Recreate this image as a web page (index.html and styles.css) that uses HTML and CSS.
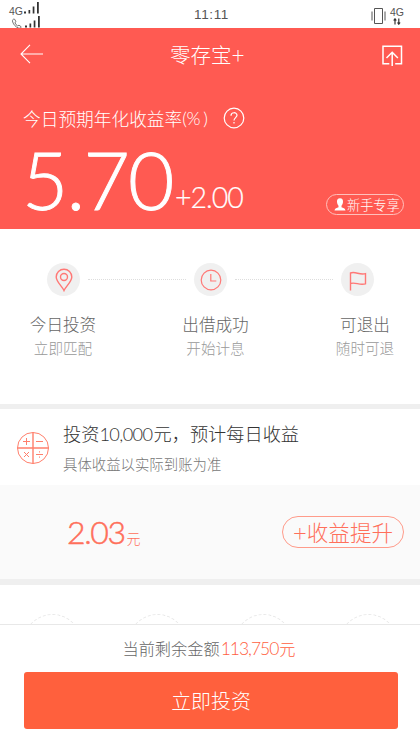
FILE: index.html
```html
<!DOCTYPE html>
<html lang="zh-CN">
<head>
<meta charset="utf-8">
<meta name="viewport" content="width=device-width, initial-scale=1">
<title>零存宝+</title>
<link rel="stylesheet" href="styles.css">
</head>
<body>
<div class="app">
  <div class="status">
    <div class="signals">
      <div class="signal"><span class="net">4G</span>
        <svg width="16" height="13" viewBox="0 0 16 13" fill="#333"><path d="M0 10.500h2v2H0zM4.500 9h1.700v3.500H4.500zM8.700 5.500h1.700v7H8.700zM13 1h1.800v11.500H13z"/></svg>
      </div>
      <div class="signal">
        <svg class="phone" width="12" height="11" viewBox="0 0 12 11" fill="none" stroke="#666" stroke-width=".9"><path d="M3.600 1.200C2 .7 1 2.200 1.700 4c.9 2.700 3 5 5.700 6 1.400.5 2.600.1 2.800-1.200L8 7.200l-1.400.7C5.300 7.200 4.400 6 3.900 4.600L5 3.700z"/></svg>
        <svg width="16" height="13" viewBox="0 0 16 13" fill="#333"><path d="M0 10.500h2v2H0zM4.500 8.500h1.700v4H4.500zM8.700 5.500h1.700v7H8.700zM13 1h1.800v11.500H13z"/></svg>
      </div>
    </div>
    <div class="time">11:11</div>
    <div class="right">
      <svg width="16" height="18" viewBox="0 0 16 18" fill="none" stroke="#555" stroke-width="1"><path d="M3.500 1.500h8v15h-8zM1 4.500v9M14 4.500v9"/></svg>
      <div class="data"><span class="net">4G</span>
        <svg width="8" height="7" viewBox="0 0 8 7" fill="none" stroke="#333" stroke-width="1.200"><path d="M2 6.500V1M.7 2.500L2 .8l1.300 1.700M5.800.5V6M4.500 4.500l1.300 1.700 1.300-1.700"/></svg>
      </div>
    </div>
  </div>

  <section class="hero">
    <header class="nav">
      <svg class="back" width="24" height="20" viewBox="0 0 24 20" fill="none" stroke="#fff" stroke-width="1.100"><path d="M10 .8L1 10l9 9.200M1 10h22"/></svg>
      <h1>零存宝<span class="plus">+</span></h1>
      <svg class="share" width="21" height="22" viewBox="0 0 21 22" fill="none" stroke="#fff" stroke-width="1.500"><path d="M7.300 18.700H1V1.300h18.500v17.400h-6.300M10.200 21V7.300M4.500 13l5.700-5.700L15.900 13"/></svg>
    </header>
    <div class="rate-label"><span>今日预期年化收益率</span><span class="pct">(%<span class="close">)</span></span>
      <svg width="22" height="22" viewBox="0 0 22 22" fill="none" stroke="#fff" stroke-width="1.200"><circle cx="11" cy="11" r="9.800"/><path d="M8 8.700c0-4 6-3.800 6-.4 0 2.200-3 2.500-3 5.200M11 15v1.600"/></svg>
    </div>
    <div class="rate-row">
      <div class="rate">5.70</div><div class="bonus"><span class="bonus-plus">+</span>2.00</div>
      <div class="badge">
        <svg width="12" height="13" viewBox="0 0 12 13" fill="#fff"><path d="M6 .3c2.200 0 3.200 1.500 3 3.700C8.800 5.600 8.200 7 7.500 7.700v1.600c1.500.7 3.700.8 4 3.200H.5c.3-2.400 2.500-2.500 4-3.200V7.700C3.800 7 3.200 5.600 3 4 2.800 1.800 3.800.3 6 .3z"/></svg>
        <span>新手专享</span>
      </div>
    </div>
  </section>

  <section class="steps">
    <div class="track">
      <div class="dot"><svg width="18" height="24" viewBox="0 0 18 24" fill="none" stroke="#ff7876" stroke-width="1.400"><path d="M9 22.500C7.600 19 1.200 13.700 1.200 9a7.800 7.800 0 0 1 15.600 0C16.800 13.700 10.400 19 9 22.500z"/><circle cx="9" cy="9" r="3.500"/></svg></div>
      <div class="line"></div>
      <div class="dot"><svg width="22" height="22" viewBox="0 0 22 22" fill="none" stroke="#ff7876" stroke-width="1.200"><circle cx="11" cy="11" r="9.800"/><path d="M10.800 5v7h5.500"/></svg></div>
      <div class="line"></div>
      <div class="dot"><svg class="flag" width="18" height="20" viewBox="0 0 18 20" fill="none" stroke="#ff7876" stroke-width="1.400"><path d="M1.500 19.500V2c5-2 9 2.500 15 .6v10.200c-6 1.900-10-2-15-.3"/></svg></div>
    </div>
    <div class="labels">
      <div class="step"><b>今日投资</b><span>立即匹配</span></div>
      <div class="step mid"><b>出借成功</b><span>开始计息</span></div>
      <div class="step"><b>可退出</b><span>随时可退</span></div>
    </div>
  </section>

  <section class="invest">
    <svg width="34" height="34" viewBox="0 0 34 34" fill="none" stroke="#ff7f6c" stroke-width="1"><circle cx="17" cy="17" r="15.500"/><path stroke-width="1.400" d="M17 1.500v31M1.500 17h31"/><path d="M7 10.500h7M10.500 7v7M20 10.500h7M8 21l5 5M13 21l-5 5M20 23.500h7M23.500 20.300v1.200M23.500 25.500v1.200"/></svg>
    <div class="invest-text">
      <h2>投资<span class="amount">10,000</span>元，预计每日收益</h2>
      <p>具体收益以实际到账为准</p>
    </div>
  </section>

  <section class="earn">
    <div class="daily">2.03<small>元</small></div>
    <div class="boost"><span class="plus">+</span>收益提升</div>
  </section>

  <section class="features">
    <i></i><i></i><i></i><i></i>
  </section>

  <footer class="bottom">
    <div class="remain">当前剩余金额<em><span>113,750</span>元</em></div>
    <button class="cta">立即投资</button>
  </footer>
</div>
</body>
</html>
```
FILE: styles.css
```css
* { box-sizing: border-box; margin: 0; padding: 0; }
body {
  width: 420px;
  height: 747px;
  overflow: hidden;
  background: #fff;
  font-family: "Noto Sans CJK SC", sans-serif;
  font-weight: 300;
  color: #666;
}
svg { display: block; flex: none; }
h1, h2, b { font-weight: 300; }
.app { display: flex; flex-direction: column; height: 747px; }

.status { height: 28px; flex: none; display: grid; grid-template-columns: 1fr 1fr 1fr; overflow: hidden; }
.signals { padding: 1px 0 0 9px; }
.signal { display: flex; height: 14px; gap: 1px; }
.signal .net { width: 14px; }
.phone { margin: 3px 1px 0 2px; }
.net { font: 400 10.500px/20px "Liberation Sans", sans-serif; color: #555; }
.time { text-align: center; font: 400 13.500px/30px "Liberation Sans", sans-serif; letter-spacing: .6px; color: #555; padding-left: 3px; }
.right { display: flex; justify-content: flex-end; padding: 7px 16px 0 0; gap: 3px; }
.data { display: flex; flex-direction: column; align-items: center; }
.data .net { line-height: 10px; height: 11px; }

.hero { height: 201px; flex: none; background: #ff5a52; color: #fff; }
.nav { height: 52px; display: flex; align-items: center; padding: 0 17px 0 20px; }
.nav h1 { margin-left: 126px; font-size: 20.500px; line-height: 52px; white-space: nowrap; }
.plus { display: inline-block; font-family: Lato, sans-serif; font-size: 1.1em; line-height: 1; }
.share { margin: 3px 0 0 auto; }
.rate-label { display: flex; align-items: center; height: 28px; margin: 24px 0 0 23px; font-size: 17.700px; line-height: 28px; }
.rate-label svg { margin-top: -1px; }
.pct { width: 41px; font-family: Lato, sans-serif; font-size: 18px; letter-spacing: -.3px; }
.pct .close { margin-left: 3px; }
.rate-row { display: flex; height: 96px; padding: 0 16px 0 22px; font-family: Lato, sans-serif; }
.rate { width: 153px; font-size: 80px; line-height: 95px; letter-spacing: -1.800px; -webkit-text-stroke: .9px #fff; white-space: nowrap; }
.bonus { font-size: 28.500px; line-height: 131px; letter-spacing: -1px; -webkit-text-stroke: .2px #fff; white-space: nowrap; }
.badge {
  display: flex; align-items: center; gap: 1px; width: 78px; height: 21px; margin: 62px 0 0 auto; padding-left: 7px;
  border: 1px solid #ffc0bb; border-radius: 11px;
  font: 300 13.200px/19px "Noto Sans CJK SC", sans-serif; white-space: nowrap;
}

.steps { height: 175px; flex: none; }
.track { display: flex; align-items: center; padding: 34px 46px 0 47px; }
.dot { width: 33px; height: 33px; border-radius: 50%; background: #f0f0f0; display: flex; align-items: center; justify-content: center; }
.flag { margin-top: 3px; }
.line { flex: 1; margin: 0 8px; border-top: 1px dotted #ddd; }
.labels { display: flex; justify-content: space-between; padding: 16px 20px 0 28px; }
.step { width: 70px; display: flex; flex-direction: column; align-items: center; white-space: nowrap; }
.step.mid { margin-left: 3px; }
.step b { font-size: 16.600px; line-height: 24px; }
.step span { font-size: 14.600px; line-height: 23px; color: #999; }

.invest { height: 81px; flex: none; border-top: 5px solid #efefef; display: flex; padding: 22px 0 0 16px; }
.invest-text { margin: -11px 0 0 13px; white-space: nowrap; }
.invest h2 { font-size: 18.200px; line-height: 27px; color: #333; }
.amount { font-family: Lato, sans-serif; letter-spacing: -.6px; margin-right: 1px; }
.invest p { font-size: 14.400px; line-height: 31px; color: #777; }

.earn {
  height: 100px; flex: none; background: #fafafa; border-bottom: 6px solid #efefef; color: #ff6f5a;
  display: flex; justify-content: space-between; align-items: center; padding: 0 16px 0 67px;
}
.daily { font: 300 32px/40px Lato, sans-serif; letter-spacing: -1.400px; -webkit-text-stroke: .5px #ff6f5a; }
.daily small { font: 300 14px "Noto Sans CJK SC", sans-serif; margin-left: 2px; -webkit-text-stroke: 0; }
.boost { width: 122px; height: 32px; border: 1px solid #ff9b8a; border-radius: 16px; font-size: 21.600px; line-height: 29px; text-align: center; white-space: nowrap; }

.features { height: 39px; flex: none; overflow: hidden; display: flex; justify-content: space-between; padding: 29px 22px 0 23px; }
.features i { width: 59px; height: 59px; border: 1px dashed #e8e8e8; border-radius: 50%; }

.bottom { flex: 1; border-top: 1px solid #e8e8e8; padding: 0 22px 0 24px; }
.remain { height: 47px; line-height: 47px; font-size: 16.200px; padding-left: 98.500px; white-space: nowrap; }
.remain em { font-style: normal; color: #ff6040; }
.remain em span { font-family: Lato, sans-serif; font-size: 17.500px; letter-spacing: -1px; margin: 0 1px; }
.cta { display: block; width: 100%; height: 57px; border: 0; border-radius: 3px; background: #ff603d; color: #fff; font: 300 19.900px/56px "Noto Sans CJK SC", sans-serif; }
```
